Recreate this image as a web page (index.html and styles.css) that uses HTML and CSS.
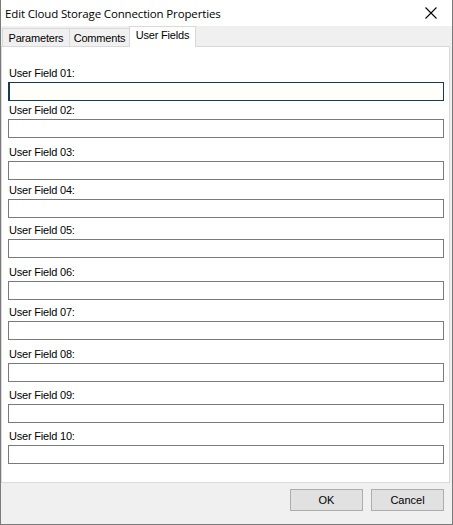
FILE: index.html
```html
<!DOCTYPE html>
<html lang="en">
<head>
  <meta charset="UTF-8">
  <title>Edit Cloud Storage Connection Properties</title>
  <link rel="stylesheet" href="styles.css">
</head>
<body>
  <div class="dialog">
    <div class="title-bar">
      <span class="title">Edit Cloud Storage Connection Properties</span>
      <button class="close-button" aria-label="Close">
        <svg width="12" height="12" viewBox="0 0 12 12">
          <path d="M0.5 0.5 L11.5 11.5 M11.5 0.5 L0.5 11.5" stroke="#000" stroke-width="1.1" fill="none"/>
        </svg>
      </button>
    </div>

    <div class="tabs">
      <div class="tab">Parameters</div>
      <div class="tab">Comments</div>
      <div class="tab active">User Fields</div>
    </div>

    <div class="panel">
      <div class="field"><label>User Field 01:</label><input type="text" class="focused"></div>
      <div class="field"><label>User Field 02:</label><input type="text"></div>
      <div class="field"><label>User Field 03:</label><input type="text"></div>
      <div class="field"><label>User Field 04:</label><input type="text"></div>
      <div class="field"><label>User Field 05:</label><input type="text"></div>
      <div class="field"><label>User Field 06:</label><input type="text"></div>
      <div class="field"><label>User Field 07:</label><input type="text"></div>
      <div class="field"><label>User Field 08:</label><input type="text"></div>
      <div class="field"><label>User Field 09:</label><input type="text"></div>
      <div class="field"><label>User Field 10:</label><input type="text"></div>
    </div>

    <div class="footer">
      <button class="dlg-button">OK</button>
      <button class="dlg-button">Cancel</button>
    </div>
  </div>
</body>
</html>
```

FILE: styles.css
```css
* {
  margin: 0;
  padding: 0;
  box-sizing: border-box;
}

body {
  font-family: "Liberation Sans", Arial, sans-serif;
  font-size: 11px;
  color: #000;
  background: #fff;
}

.dialog {
  width: 453px;
  height: 525px;
  border: 1px solid #7a7a7a;
  border-top: none;
  background: #f0f0f0;
  display: flex;
  flex-direction: column;
}

/* Title bar */
.title-bar {
  height: 26px;
  background: #fff;
  display: flex;
  align-items: center;
  justify-content: space-between;
  padding-left: 4px;
}

.title {
  font-family: "Open Sans", sans-serif;
  font-size: 11.5px;
  letter-spacing: -0.15px;
}

.close-button {
  width: 46px;
  height: 26px;
  border: none;
  background: transparent;
  display: flex;
  align-items: center;
  justify-content: center;
  padding-left: 4px;
}

/* Tabs */
.tabs {
  display: flex;
  height: 20px;
  align-items: flex-end;
  padding-left: 1px;
  position: relative;
  z-index: 1;
}

.tab {
  height: 18px;
  padding: 3px 0 0 0;
  border: 1px solid #d9d9d9;
  border-bottom: none;
  margin-right: -1px;
  font-size: 11px;
  letter-spacing: -0.2px;
  text-align: center;
  background: #f0f0f0;
}

.tab:nth-child(1) { width: 68px; }
.tab:nth-child(2) { width: 61px; }

.tab.active {
  width: 67px;
  height: 21px;
  margin-bottom: -1px;
  padding-top: 2px;
  background: #fff;
}

/* Panel */
.panel {
  height: 437px;
  margin-right: 2px;
  background: #fff;
  border: 1px solid #d9d9d9;
  padding: 17px 6px 0 6px;
  display: flex;
  flex-direction: column;
}

.field label {
  display: block;
  height: 18px;
  line-height: 18px;
  padding-left: 1px;
  letter-spacing: -0.2px;
}

.field input {
  display: block;
  width: 436px;
  height: 19px;
  border: 1px solid #7a7a7a;
  background: #fff;
  outline: none;
  margin-bottom: 2px;
}

.field input.focused {
  border-color: #1a3b4d;
  border-left-width: 2px;
  background: #fffff9;
}

.field:nth-child(2) { margin-top: -2px; }
.field:nth-child(3) { margin-top: 3px; }
.field:nth-child(4) { margin-top: -1px; }
.field:nth-child(5) { margin-top: 1px; }
.field:nth-child(6) { margin-top: 3px; }
.field:nth-child(7) { margin-top: 1px; }
.field:nth-child(8) { margin-top: 3px; }
.field:nth-child(9) { margin-top: 2px; }
.field:nth-child(10) { margin-top: 2px; }

/* Footer */
.footer {
  flex: 1;
  display: flex;
  justify-content: flex-end;
  gap: 8px;
  padding: 6px 8px 0 0;
}

.dlg-button {
  width: 73px;
  height: 22px;
  border: 1px solid #adadad;
  background: #e1e1e1;
  font-family: "Liberation Sans", Arial, sans-serif;
  font-size: 11px;
  color: #000;
}
```
